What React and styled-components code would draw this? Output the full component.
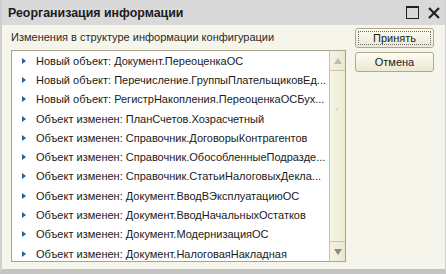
import React from 'react';
import styled, { createGlobalStyle } from 'styled-components';

const GlobalStyle = createGlobalStyle`
  html, body {
    margin: 0;
    padding: 0;
    background: #f6f5ec;
  }
  * {
    box-sizing: border-box;
  }
`;

const Window = styled.div`
  width: 446px;
  height: 274px;
  display: flex;
  flex-direction: column;
  background: #f6f5ec;
  border-left: 2px solid #cfcfcf;
  border-right: 1px solid #cfcfcf;
  border-bottom: 5px solid #c4c4c4;
  font-family: "Liberation Sans", Arial, sans-serif;
  overflow: hidden;
`;

const TitleBar = styled.div`
  height: 25px;
  flex: none;
  display: flex;
  align-items: center;
  justify-content: space-between;
  padding: 0 5px 0 6px;
  background: #d9d9d9;
`;

const Title = styled.div`
  font-size: 12.4px;
  font-weight: 700;
  color: #1c1c1c;
`;

const TitleButtons = styled.div`
  display: flex;
  align-items: center;
  gap: 9px;
`;

const Body = styled.div`
  flex: 1;
  display: flex;
  gap: 9px;
  padding: 3px 11px 7px 9px;
  min-height: 0;
`;

const Main = styled.div`
  flex: 1;
  display: flex;
  flex-direction: column;
  min-width: 0;
`;

const Caption = styled.div`
  height: 22px;
  padding-top: 1px;
  font-size: 11px;
  line-height: 16px;
  color: #2a2a2a;
`;

const ListBox = styled.div`
  flex: 1;
  display: flex;
  border: 1px solid #a9a38a;
  background: #ffffff;
  min-height: 0;
`;

const Rows = styled.div`
  flex: 1;
  min-width: 0;
  overflow: hidden;
`;

const Row = styled.div`
  height: 19.3px;
  display: flex;
  align-items: center;
  padding-left: 10px;
  font-size: 11px;
  color: #1a1a1a;
  white-space: nowrap;
`;

const Arrow = styled.span`
  flex: none;
  width: 0;
  height: 0;
  margin-right: 10px;
  border-top: 3.5px solid transparent;
  border-bottom: 3.5px solid transparent;
  border-left: 4px solid #2d5d93;
`;

const Label = styled.span`
  overflow: hidden;
  text-overflow: ellipsis;
`;

const ScrollBar = styled.div`
  width: 16px;
  flex: none;
  display: flex;
  flex-direction: column;
  border-left: 1px solid #c9c3a8;
  background: linear-gradient(to right, #f7f5e7, #efebd2);
`;

const ScrollButton = styled.div`
  height: 20px;
  flex: none;
  display: flex;
  align-items: center;
  justify-content: center;
  background: linear-gradient(to right, #f6f3e4, #ebe7cf);
  border-top: ${p => (p.$down ? '1px solid #c9c3a8' : 'none')};
  border-bottom: ${p => (p.$down ? 'none' : '1px solid #c9c3a8')};
`;

const Triangle = styled.span`
  width: 0;
  height: 0;
  border-left: 4px solid transparent;
  border-right: 4px solid transparent;
  ${p => (p.$down
    ? 'border-top: 6px solid #8a8a8a;'
    : 'border-bottom: 6px solid #bdbdb4;')}
`;

const Track = styled.div`
  flex: 1;
  display: flex;
  flex-direction: column;
  align-items: center;
  padding-top: 37px;
`;

const Grip = styled.span`
  width: 3px;
  height: 3px;
  border-left: 1px solid #d8d2b5;
  border-top: 1px solid #d8d2b5;
`;

const Side = styled.div`
  width: 79px;
  flex: none;
  display: flex;
  flex-direction: column;
  gap: 4px;
`;

const Button = styled.button`
  position: relative;
  height: 20px;
  padding: 0;
  border: 1px solid #b0a88a;
  border-radius: 3px;
  background: linear-gradient(to bottom, #fdfcf4, #ece8d2);
  font-family: "Liberation Sans", Arial, sans-serif;
  font-size: 11px;
  color: #1a1a1a;
  cursor: pointer;
  ${p => p.$focused && `
    &::after {
      content: '';
      position: absolute;
      inset: 2px;
      border: 1px dotted #6d6d6d;
      border-radius: 1px;
    }
  `}
`;

const items = [
  'Новый объект: Документ.ПереоценкаОС',
  'Новый объект: Перечисление.ГруппыПлательщиковЕд...',
  'Новый объект: РегистрНакопления.ПереоценкаОСБух...',
  'Объект изменен: ПланСчетов.Хозрасчетный',
  'Объект изменен: Справочник.ДоговорыКонтрагентов',
  'Объект изменен: Справочник.ОбособленныеПодразде...',
  'Объект изменен: Справочник.СтатьиНалоговыхДекла...',
  'Объект изменен: Документ.ВводВЭксплуатациюОС',
  'Объект изменен: Документ.ВводНачальныхОстатков',
  'Объект изменен: Документ.МодернизацияОС',
  'Объект изменен: Документ.НалоговаяНакладная',
];

export default function App() {
  return (
    <>
      <GlobalStyle />
      <Window>
        <TitleBar>
          <Title>Реорганизация информации</Title>
          <TitleButtons>
            <svg width="13" height="13" viewBox="0 0 13 13">
              <rect x="0.5" y="0.5" width="12" height="12" fill="none" stroke="#222" strokeWidth="1" />
              <line x1="0" y1="1.5" x2="13" y2="1.5" stroke="#222" strokeWidth="1" />
            </svg>
            <svg width="12" height="12" viewBox="0 0 12 12">
              <path d="M1 1 L11 11 M11 1 L1 11" stroke="#222" strokeWidth="2.2" />
            </svg>
          </TitleButtons>
        </TitleBar>
        <Body>
          <Main>
            <Caption>Изменения в структуре информации конфигурации</Caption>
            <ListBox>
              <Rows>
                {items.map(text => (
                  <Row key={text}>
                    <Arrow />
                    <Label>{text}</Label>
                  </Row>
                ))}
              </Rows>
              <ScrollBar>
                <ScrollButton>
                  <Triangle />
                </ScrollButton>
                <Track>
                  <Grip />
                </Track>
                <ScrollButton $down>
                  <Triangle $down />
                </ScrollButton>
              </ScrollBar>
            </ListBox>
          </Main>
          <Side>
            <Button $focused>Принять</Button>
            <Button>Отмена</Button>
          </Side>
        </Body>
      </Window>
    </>
  );
}
